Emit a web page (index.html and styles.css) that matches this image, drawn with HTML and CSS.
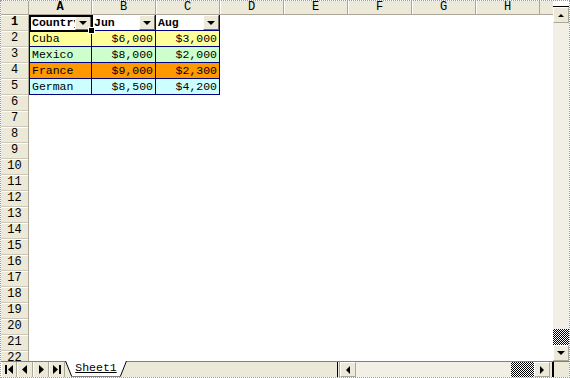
FILE: index.html
```html
<!DOCTYPE html>
<html lang="en">
<head>
  <meta charset="UTF-8" />
  <title>Sheet1</title>
  <link rel="stylesheet" href="styles.css">
</head>
<body>
  <div class="window">
    <div class="main">
      <div class="sheet">
        <div class="corner"></div>
        <div class="colheads">
          <div class="ch first sel">A</div>
          <div class="ch">B</div>
          <div class="ch">C</div>
          <div class="ch">D</div>
          <div class="ch">E</div>
          <div class="ch">F</div>
          <div class="ch">G</div>
          <div class="ch">H</div>
        </div>
        <div class="rowheads">
          <div class="rh sel">1</div>
          <div class="rh">2</div>
          <div class="rh">3</div>
          <div class="rh">4</div>
          <div class="rh">5</div>
          <div class="rh">6</div>
          <div class="rh">7</div>
          <div class="rh">8</div>
          <div class="rh">9</div>
          <div class="rh">10</div>
          <div class="rh">11</div>
          <div class="rh">12</div>
          <div class="rh">13</div>
          <div class="rh">14</div>
          <div class="rh">15</div>
          <div class="rh">16</div>
          <div class="rh">17</div>
          <div class="rh">18</div>
          <div class="rh">19</div>
          <div class="rh">20</div>
          <div class="rh">21</div>
          <div class="rh">22</div>
        </div>
        <div class="cells">
          <div class="data">
            <div class="c hd"><span>Country</span><i class="dd"></i></div>
            <div class="c hd"><span>Jun</span><i class="dd"></i></div>
            <div class="c hd"><span>Aug</span><i class="dd"></i></div>

            <div class="c yellow">Cuba</div>
            <div class="c num yellow">$6,000</div>
            <div class="c num yellow">$3,000</div>

            <div class="c green">Mexico</div>
            <div class="c num green">$8,000</div>
            <div class="c num green">$2,000</div>

            <div class="c orange">France</div>
            <div class="c num orange">$9,000</div>
            <div class="c num orange">$2,300</div>

            <div class="c cyan">German</div>
            <div class="c num cyan">$8,500</div>
            <div class="c num cyan">$4,200</div>

            <div class="selbox"></div>
          </div>
        </div>
      </div>

      <div class="vscroll">
        <div class="vsplit"></div>
        <div class="sbtn"><i class="arr up"></i></div>
        <div class="vtrack"><div class="checker"></div></div>
        <div class="sbtn"><i class="arr down"></i></div>
      </div>
    </div>

    <div class="bar">
      <div class="nav">
        <div class="nb">
          <svg width="8" height="9" viewBox="0 0 8 9"><rect x="0" y="0" width="2" height="9" fill="#000"/><polygon points="8,0 8,9 3,4.5" fill="#000"/></svg>
        </div>
        <div class="nb">
          <svg width="6" height="9" viewBox="0 0 6 9"><polygon points="5,0 5,9 0,4.5" fill="#000"/></svg>
        </div>
        <div class="nb">
          <svg width="6" height="9" viewBox="0 0 6 9"><polygon points="1,0 1,9 6,4.5" fill="#000"/></svg>
        </div>
        <div class="nb">
          <svg width="8" height="9" viewBox="0 0 8 9"><polygon points="0,0 0,9 5,4.5" fill="#000"/><rect x="6" y="0" width="2" height="9" fill="#000"/></svg>
        </div>
      </div>
      <div class="tab">
        <svg class="tab-shape" width="62" height="16" viewBox="0 0 62 16">
          <polygon points="0,0 62,0 56,15 6,15" fill="#fff"/>
          <line x1="0.5" y1="0" x2="6.5" y2="15" stroke="#000" stroke-width="1"/>
          <line x1="6" y1="15.5" x2="56" y2="15.5" stroke="#808080" stroke-width="1"/>
          <line x1="55.5" y1="15" x2="61.5" y2="0" stroke="#000" stroke-width="1"/>
        </svg>
        <span>Sheet1</span>
      </div>
      <div class="filler"></div>
      <div class="hscroll">
        <div class="hsplit"></div>
        <div class="sbtn h"><i class="arr left"></i></div>
        <div class="htrack"><div class="checker"></div></div>
        <div class="sbtn h"><i class="arr right"></i></div>
        <div class="hgap"></div>
      </div>
      <div class="sizer"></div>
    </div>
  </div>
</body>
</html>
```

FILE: styles.css
```css
* {
  box-sizing: border-box;
}

body {
  margin: 0;
  background: #fff;
  font-family: "Liberation Mono", "DejaVu Sans Mono", monospace;
  font-size: 12px;
  color: #000;
}

.window {
  width: 570px;
  height: 378px;
  border: 1px dotted #9a9a9a;
  display: flex;
  flex-direction: column;
  overflow: hidden;
}

.main {
  display: flex;
  height: 360px;
  flex: none;
}

/* grid area */
.sheet {
  width: 552px;
  display: grid;
  grid-template-columns: 28px 1fr;
  grid-template-rows: 14px 1fr;
  overflow: hidden;
}

.corner {
  background: #ece9d8;
  border-right: 1px solid #aca899;
  border-bottom: 1px solid #aca899;
}

.colheads {
  display: flex;
  background: #ece9d8;
  border-bottom: 1px solid #aca899;
  overflow: hidden;
}

.ch {
  flex: none;
  width: 64px;
  border-right: 1px solid #aca899;
  box-shadow: inset 1px 0 #fff;
  text-align: center;
  line-height: 13px;
}

.ch.first {
  width: 63px;
  box-shadow: none;
}

.sel {
  font-weight: bold;
}

.rowheads {
  background: #ece9d8;
  border-right: 1px solid #aca899;
  overflow: hidden;
}

.rh {
  height: 16px;
  border-bottom: 1px solid #cbc8b9;
  box-shadow: inset 0 1px #fff;
  text-align: center;
  line-height: 15px;
}

.cells {
  background: #fff;
}

.data {
  position: relative;
  display: grid;
  grid-template-columns: 62px 64px 64px;
  width: 191px;
  border-left: 1px solid #000080;
}

.c {
  height: 16px;
  border-right: 1px solid #000080;
  border-bottom: 1px solid #000080;
  padding: 0 2px;
  line-height: 15px;
  font-size: 11.5px;
  white-space: nowrap;
  overflow: hidden;
}

.c.num {
  text-align: right;
}

.c.hd {
  display: flex;
  padding-right: 0;
  font-weight: bold;
  background: #fff;
}

.hd span {
  flex: 1;
  overflow: hidden;
}

.dd {
  flex: none;
  width: 16px;
  height: 15px;
  background: #ece9d8;
  border: 1px solid;
  border-color: #fff #716f64 #716f64 #fff;
  display: flex;
  align-items: center;
  justify-content: center;
}

.dd::before {
  content: "";
  border-left: 4px solid transparent;
  border-right: 4px solid transparent;
  border-top: 4px solid #000;
}

.yellow { background: #ffff99; }
.green { background: #ccffcc; }
.orange { background: #ff9900; }
.cyan { background: #ccffff; }

.selbox {
  position: absolute;
  left: -1px;
  top: 0;
  width: 64px;
  height: 17px;
  border: 2px solid #000;
  pointer-events: none;
}

.selbox::after {
  content: "";
  position: absolute;
  right: -4px;
  bottom: -4px;
  width: 5px;
  height: 5px;
  background: #000;
  border: 1px solid #fff;
}

/* scroll bars */
.vscroll {
  width: 16px;
  display: flex;
  flex-direction: column;
  background: #f1efe6;
}

.vsplit {
  height: 6px;
  flex: none;
  background: #fff;
  border-bottom: 1px solid #000;
}

.sbtn {
  flex: none;
  height: 16px;
  background: #ece9d8;
  border: 1px solid;
  border-color: #fff #aca899 #aca899 #fff;
  display: flex;
  align-items: center;
  justify-content: center;
}

.sbtn.h {
  width: 16px;
  height: 15px;
}

.vtrack {
  flex: 1;
  display: flex;
  flex-direction: column;
  justify-content: flex-end;
}

.vtrack .checker {
  height: 16px;
}

.checker {
  background: repeating-conic-gradient(#000 0 25%, #fff 0 50%) 0 0 / 2px 2px;
}

.arr {
  width: 0;
  height: 0;
}

.arr.up {
  border-left: 3px solid transparent;
  border-right: 3px solid transparent;
  border-bottom: 3px solid #000;
}

.arr.down {
  border-left: 4px solid transparent;
  border-right: 4px solid transparent;
  border-top: 4px solid #000;
}

.arr.left {
  border-top: 4px solid transparent;
  border-bottom: 4px solid transparent;
  border-right: 4px solid #000;
}

.arr.right {
  border-top: 4px solid transparent;
  border-bottom: 4px solid transparent;
  border-left: 4px solid #000;
}

/* sheet tabs bar */
.bar {
  height: 16px;
  flex: none;
  display: flex;
  background: #ece9d8;
}

.nav {
  display: flex;
  border-top: 1px solid #808080;
}

.nb {
  width: 16px;
  height: 15px;
  display: flex;
  align-items: center;
  justify-content: center;
  border-right: 1px solid #aca899;
  box-shadow: inset 1px 0 #fff;
}

.tab {
  position: relative;
  flex: none;
  width: 62px;
  height: 16px;
  display: flex;
  justify-content: center;
  font-size: 11.5px;
  line-height: 14px;
}

.tab-shape {
  position: absolute;
  left: 0;
  top: 0;
}

.tab span {
  position: relative;
  text-decoration: underline;
}

.filler {
  flex: 1;
  border-top: 1px solid #808080;
}

.hscroll {
  width: 216px;
  display: flex;
  background: #f1efe6;
  border-top: 1px solid #808080;
}

.hsplit {
  width: 3px;
  border-left: 1px solid #000;
  border-right: 1px solid #aca899;
  background: #ece9d8;
}

.htrack {
  flex: 1;
  display: flex;
  justify-content: flex-end;
}

.htrack .checker {
  width: 23px;
}

.hgap {
  width: 3px;
  background: #ece9d8;
  border-right: 1px solid #000;
}

.sizer {
  width: 16px;
  border-top: 1px solid #808080;
  border-left: 1px solid #000;
  background: #ece9d8;
}
```
